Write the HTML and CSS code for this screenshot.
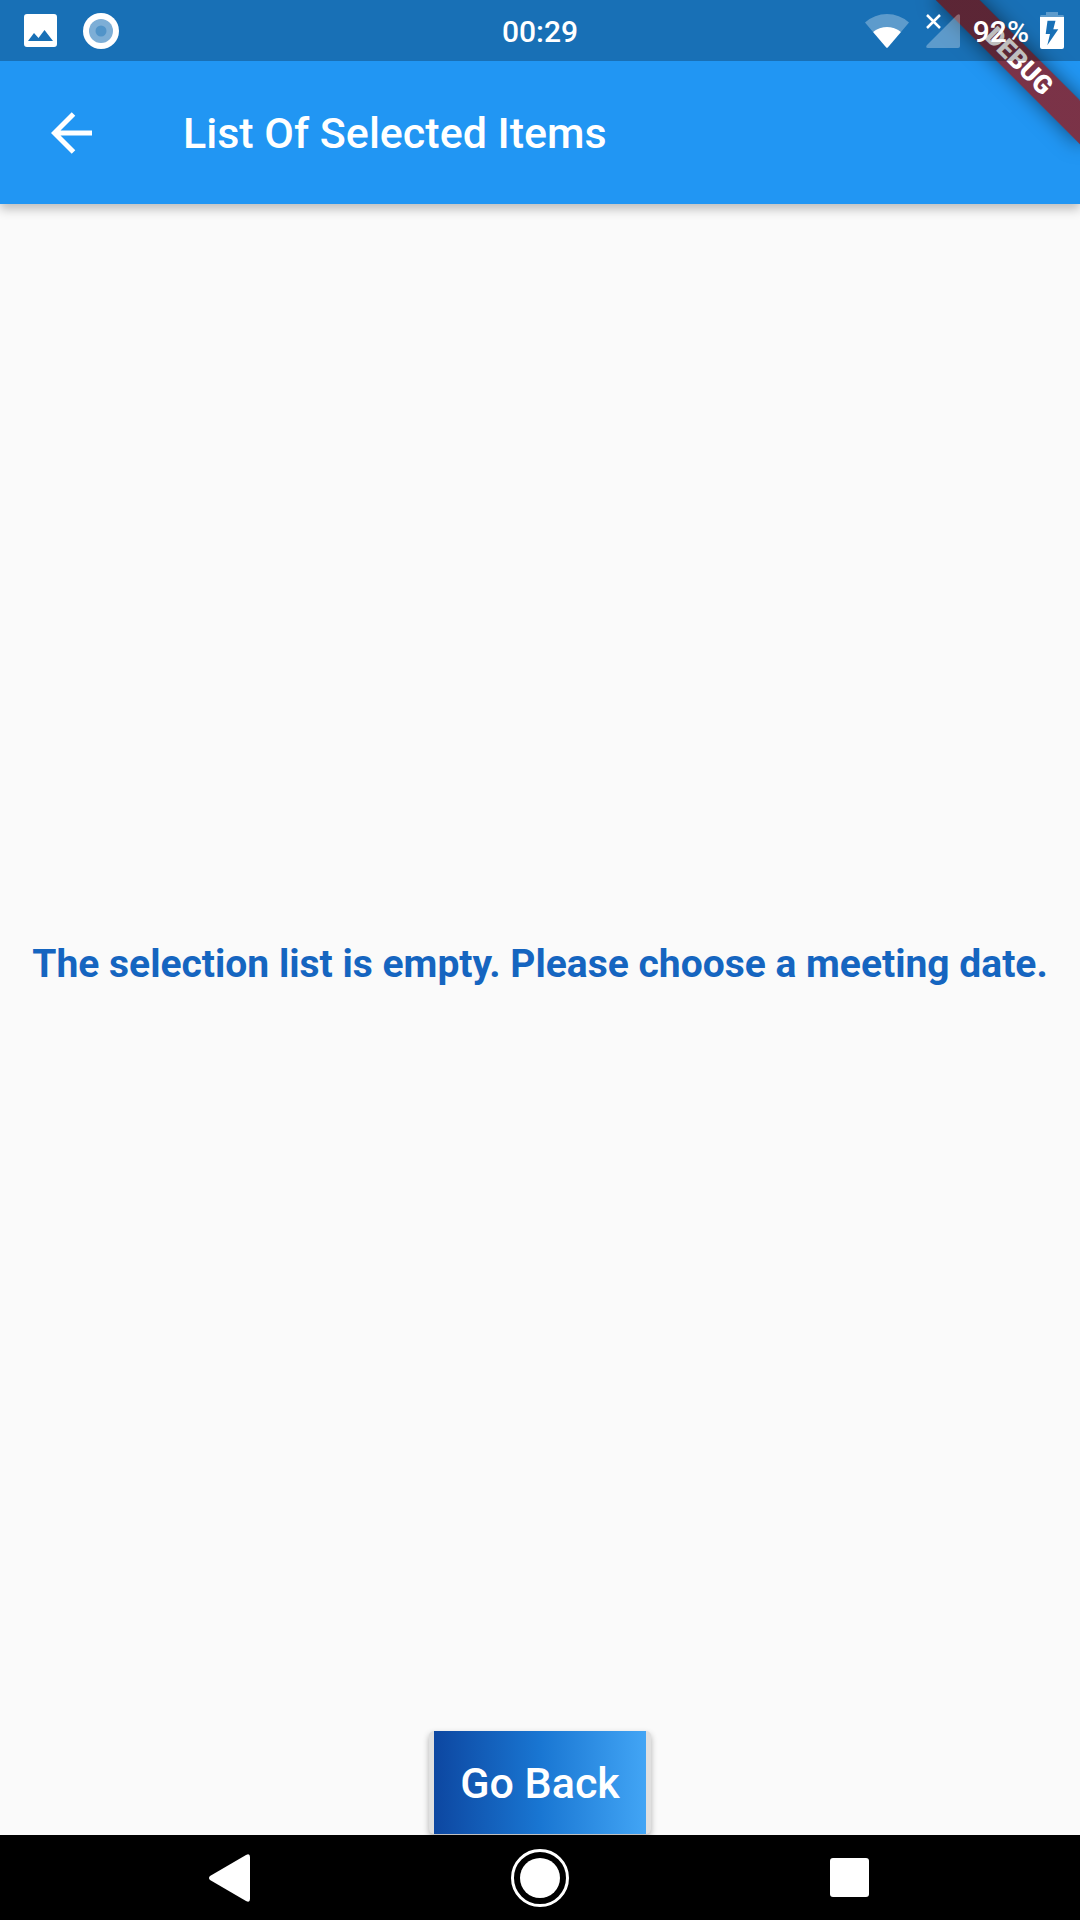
FILE: index.html
```html
<!DOCTYPE html>
<html lang="en">
<head>
  <meta charset="utf-8">
  <meta name="viewport" content="width=device-width, initial-scale=1">
  <title>List Of Selected Items</title>
  <link rel="stylesheet" href="styles.css">
</head>
<body>
  <div class="status-bar">
    <div class="status-group status-group-start">
      <svg width="33" height="33" viewBox="0 0 33 33" aria-hidden="true">
        <path fill="#fff" fill-rule="evenodd" d="M3 0H30Q33 0 33 3V30Q33 33 30 33H3Q0 33 0 30V3Q0 0 3 0ZM4 27H29L20.500 16L14.500 24L10 19Z"/>
      </svg>
      <svg width="36" height="36" viewBox="0 0 36 36" aria-hidden="true">
        <circle cx="18" cy="18" r="18" fill="#fff"/>
        <circle cx="18" cy="18" r="12" fill="#7daed6"/>
        <circle cx="18" cy="18" r="5.500" fill="#5194c9"/>
      </svg>
    </div>
    <time class="status-text">00:29</time>
    <div class="status-group status-group-end">
      <svg width="44" height="34" viewBox="0 0 44 34" aria-hidden="true">
        <path fill="#fff" fill-opacity=".3" d="M0 8.500Q9.500 0 22 0T44 8.500L36 18Q30 13 22 13T8 18Z"/>
        <path fill="#fff" d="M8 18Q14 13 22 13T36 18L23 33.200Q22 34.200 21 33.200Z"/>
      </svg>
      <svg class="signal" width="34" height="34" viewBox="0 0 34 34" aria-hidden="true">
        <path fill="#fff" fill-opacity=".3" d="M1 31L31 1Q34 -1 34 2V32Q34 34 32 34H2Q-1 34 1 31Z"/>
        <path stroke="#fff" stroke-width="2.500" d="M1 1L14 14M14 1L1 14"/>
      </svg>
      <span class="status-text">92%</span>
      <svg width="24" height="37" viewBox="0 0 24 37" aria-hidden="true">
        <path fill="#fff" fill-opacity=".3" d="M6 0H18V3H23Q24 3 24 5H0Q0 3 1 3H6Z"/>
        <path fill="#fff" fill-rule="evenodd" d="M0 5H24V35Q24 37 22 37H2Q0 37 0 35ZM7.500 8.700L5.700 22H10L7.300 33.300L18.300 17.300H13.300L15.500 8.700Z"/>
      </svg>
    </div>
  </div>

  <header class="app-bar">
    <button class="back-button" type="button" aria-label="Back">
      <svg width="42" height="42" viewBox="0 0 42 42" aria-hidden="true">
        <path fill="none" stroke="#fff" stroke-width="5" d="M22.500 2L3.500 21L22.500 40M3.500 21H41"/>
      </svg>
    </button>
    <h1 class="title">List Of Selected Items</h1>
    <div class="banner-corner"><div class="banner">DEBUG</div></div>
  </header>

  <main class="content">
    <p class="message">The selection list is empty. Please choose a meeting date.</p>
    <button class="go-back" type="button"><span class="go-back-label">Go Back</span></button>
  </main>

  <nav class="nav-bar" aria-label="System navigation">
    <button class="nav-button" type="button" aria-label="Back">
      <svg width="42" height="48" viewBox="0 0 42 48" aria-hidden="true">
        <path fill="#fff" d="M1 22L37 1Q41 -1 41 3V45Q41 49 37 47L1 26Q-1 24 1 22Z"/>
      </svg>
    </button>
    <button class="nav-button" type="button" aria-label="Home">
      <svg width="58" height="58" viewBox="0 0 58 58" aria-hidden="true">
        <circle cx="29" cy="29" r="27.500" fill="none" stroke="#fff" stroke-width="3"/>
        <circle cx="29" cy="29" r="20" fill="#fff"/>
      </svg>
    </button>
    <button class="nav-button" type="button" aria-label="Recent apps">
      <svg width="39" height="39" viewBox="0 0 39 39" aria-hidden="true">
        <rect width="39" height="39" rx="3" fill="#fff"/>
      </svg>
    </button>
  </nav>
</body>
</html>
```
FILE: styles.css
```css
* {
  box-sizing: border-box;
}

body {
  position: relative;
  display: flex;
  flex-direction: column;
  min-height: 100vh;
  margin: 0;
  background: #fafafa;
  color: #fff;
  font-family: Roboto, "Liberation Sans", sans-serif;
}

button {
  padding: 0;
  border: 0;
  background: none;
  color: inherit;
  font: inherit;
  cursor: pointer;
}

svg {
  display: block;
  flex: none;
}

/* The system bar is translucent and lies over the app bar. */
.status-bar {
  position: absolute;
  top: 0;
  left: 0;
  right: 0;
  z-index: 2;
  display: grid;
  grid-template-columns: 1fr auto 1fr;
  align-items: center;
  height: 61px;
  padding: 0 16px;
  background: rgba(0, 0, 0, 0.25);
  font-size: 30px;
  font-weight: 500;
  line-height: 36px;
}

.status-text {
  padding-top: 2px;
}

.status-group {
  display: flex;
  align-items: center;
  gap: 26px;
}

.status-group-start {
  padding-left: 8px;
}

.status-group-end {
  justify-content: flex-end;
  gap: 11px;
}

.signal {
  margin: 0 2px 0 6px;
}

.app-bar {
  position: relative;
  z-index: 1;
  display: flex;
  align-items: center;
  gap: 90px;
  padding: 61px 40px 0 51px;
  min-height: 204px;
  background: #2196f3;
  box-shadow: 0 5px 10px rgba(0, 0, 0, 0.25);
}

.title {
  margin: 0;
  font-size: 43px;
  font-weight: 500;
  line-height: 50px;
}

.banner-corner {
  position: absolute;
  top: 0;
  right: 0;
  width: 204px;
  height: 204px;
  overflow: hidden;
  pointer-events: none;
}

.banner {
  position: absolute;
  top: 71px;
  right: -102px;
  width: 204px;
  height: 31px;
  background:
    linear-gradient(rgba(183, 28, 28, 0.63), rgba(183, 28, 28, 0.63)),
    rgba(0, 0, 0, 0.4);
  box-shadow: 0 0 20px rgba(0, 0, 0, 0.5);
  font-size: 26px;
  font-weight: 900;
  line-height: 31px;
  text-align: center;
  transform: rotate(45deg);
  transform-origin: 102px -71px;
}

.content {
  display: flex;
  flex: 1;
  flex-direction: column;
  align-items: center;
}

.message {
  margin: auto 0;
  padding: 0 24px 8px;
  color: #1565c0;
  font-size: 39px;
  font-weight: 700;
  line-height: 46px;
  text-align: center;
}

.go-back {
  margin-bottom: 1px;
  padding: 0 5px;
  border-radius: 5px;
  background: #e0e0e0;
  box-shadow: 0 3px 6px rgba(0, 0, 0, 0.3);
}

.go-back-label {
  display: block;
  padding: 27px 26px 26px;
  background: linear-gradient(to right, #0d47a1, #1976d2, #42a5f5);
  font-size: 43px;
  font-weight: 500;
  line-height: 50px;
}

.nav-bar {
  z-index: 1;
  display: grid;
  grid-template-columns: repeat(3, 1fr);
  min-height: 85px;
  padding: 0 7%;
  background: #000;
}

.nav-button {
  display: flex;
  align-items: center;
  justify-content: center;
}
```
